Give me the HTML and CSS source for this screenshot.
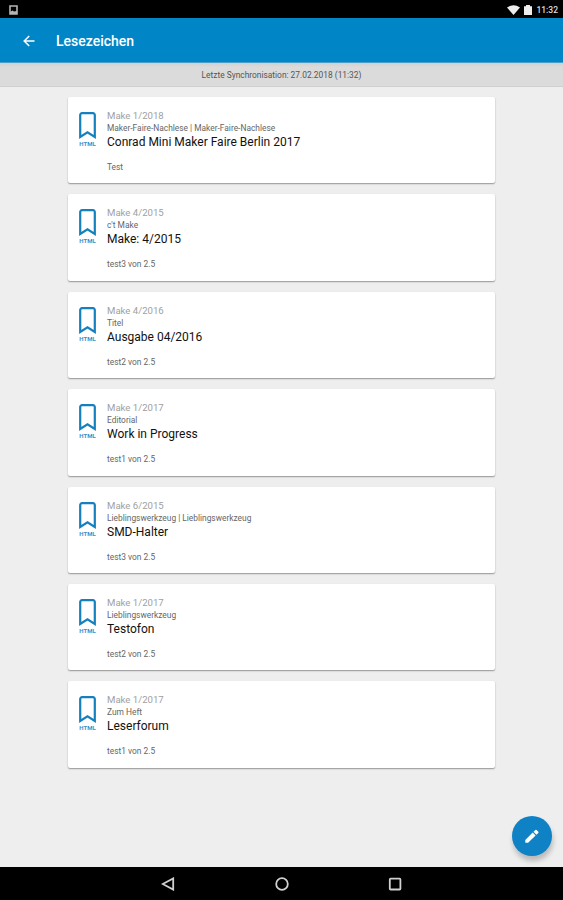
FILE: index.html
```html
<!DOCTYPE html>
<html lang="de">
<head>
    <meta charset="UTF-8">
    <meta name="viewport" content="width=device-width, initial-scale=1.0">
    <title>Lesezeichen</title>
    <link rel="stylesheet" href="styles.css">
</head>
<body>

    <!-- Bookmark-Symbol, wird in jeder Karte verwendet -->
    <svg class="symbols" width="0" height="0">
        <symbol id="bookmark" viewBox="0 0 17 27">
            <path d="M1.2 25V3a1.8 1.8 0 0 1 1.8-1.8h11a1.8 1.8 0 0 1 1.8 1.8v22l-7.3-4.600z" fill="none" stroke="#1580be" stroke-width="2.200"/>
        </symbol>
    </svg>

    <div class="statusbar">
        <svg class="picture" width="9" height="10" viewBox="0 0 9 10">
            <path d="M1 1h7v8H1z" fill="none" stroke="#b5b5b5" stroke-width="1.6"/>
            <path d="M1 9V7l2.500-1.500L5 6.500 8 6v3z" fill="#b5b5b5"/>
        </svg>
        <div class="status-right">
            <svg width="13" height="10" viewBox="0 0 13 10"><path d="M0 2.500Q6.500-2 13 2.500L6.500 10z" fill="#eee"/></svg>
            <svg width="8" height="10" viewBox="0 0 8 10"><path d="M0 1.200h2V0h4v1.200h2V10H0z" fill="#eee"/></svg>
            <span class="clock">11:32</span>
        </div>
    </div>

    <header class="appbar">
        <svg width="12" height="12" viewBox="0 0 12 12"><path d="M11.500 6H1.500M6.200 1L1.200 6l5 5" fill="none" stroke="#fff" stroke-width="1.500"/></svg>
        <h1>Lesezeichen</h1>
    </header>

    <div class="sync"><span>Letzte Synchronisation: 27.02.2018 (11:32)</span></div>

    <main class="list">
        <div class="card">
            <div class="card-icon"><svg><use href="#bookmark"/></svg><span>HTML</span></div>
            <div class="card-text">
                <div class="issue">Make 1/2018</div>
                <div class="section">Maker-Faire-Nachlese | Maker-Faire-Nachlese</div>
                <h2>Conrad Mini Maker Faire Berlin 2017</h2>
                <div class="note">Test</div>
            </div>
        </div>

        <div class="card">
            <div class="card-icon"><svg><use href="#bookmark"/></svg><span>HTML</span></div>
            <div class="card-text">
                <div class="issue">Make 4/2015</div>
                <div class="section">c't Make</div>
                <h2>Make: 4/2015</h2>
                <div class="note">test3 von 2.5</div>
            </div>
        </div>

        <div class="card">
            <div class="card-icon"><svg><use href="#bookmark"/></svg><span>HTML</span></div>
            <div class="card-text">
                <div class="issue">Make 4/2016</div>
                <div class="section">Titel</div>
                <h2>Ausgabe 04/2016</h2>
                <div class="note">test2 von 2.5</div>
            </div>
        </div>

        <div class="card">
            <div class="card-icon"><svg><use href="#bookmark"/></svg><span>HTML</span></div>
            <div class="card-text">
                <div class="issue">Make 1/2017</div>
                <div class="section">Editorial</div>
                <h2>Work in Progress</h2>
                <div class="note">test1 von 2.5</div>
            </div>
        </div>

        <div class="card">
            <div class="card-icon"><svg><use href="#bookmark"/></svg><span>HTML</span></div>
            <div class="card-text">
                <div class="issue">Make 6/2015</div>
                <div class="section">Lieblingswerkzeug | Lieblingswerkzeug</div>
                <h2>SMD-Halter</h2>
                <div class="note">test3 von 2.5</div>
            </div>
        </div>

        <div class="card">
            <div class="card-icon"><svg><use href="#bookmark"/></svg><span>HTML</span></div>
            <div class="card-text">
                <div class="issue">Make 1/2017</div>
                <div class="section">Lieblingswerkzeug</div>
                <h2>Testofon</h2>
                <div class="note">test2 von 2.5</div>
            </div>
        </div>

        <div class="card">
            <div class="card-icon"><svg><use href="#bookmark"/></svg><span>HTML</span></div>
            <div class="card-text">
                <div class="issue">Make 1/2017</div>
                <div class="section">Zum Heft</div>
                <h2>Leserforum</h2>
                <div class="note">test1 von 2.5</div>
            </div>
        </div>
    </main>

    <button class="fab" aria-label="Bearbeiten">
        <svg width="14" height="14" viewBox="0 0 14 14">
            <path d="M.3 10.900v2.800h2.800l7.500-7.300-2.900-2.900zM8.500 2.800l2.900 2.900 1.900-1.800a.8.8 0 0 0 0-1.100L11.500 1a.8.8 0 0 0-1.100 0z" fill="#fff"/>
        </svg>
    </button>

    <nav class="navbar">
        <svg width="14" height="14" viewBox="0 0 14 14"><path d="M12.200 1.400v11.200L1.700 7z"/></svg>
        <svg width="14" height="14" viewBox="0 0 14 14"><circle cx="7" cy="7" r="5.800"/></svg>
        <svg width="14" height="14" viewBox="0 0 14 14"><rect x="1.800" y="1.700" width="10.600" height="10.800" rx=".8"/></svg>
    </nav>

</body>
</html>
```
FILE: styles.css
```css
* {
    box-sizing: border-box;
}

body {
    margin: 0;
    height: 900px;
    display: flex;
    flex-direction: column;
    background: #eee;
    font-family: Roboto, sans-serif;
    overflow: hidden;
}

.symbols {
    display: none;
}

/* Statusleiste */
.statusbar {
    height: 18px;
    flex-shrink: 0;
    display: flex;
    align-items: center;
    justify-content: space-between;
    padding: 1px 5px 0 9px;
    background: #000;
}

.status-right {
    display: flex;
    align-items: center;
    gap: 4px;
}

.clock {
    color: #ddd;
    font-size: 8.5px;
    line-height: 10px;
    font-weight: 500;
}

/* Kopfzeile */
.appbar {
    height: 45px;
    flex-shrink: 0;
    display: flex;
    align-items: center;
    gap: 21px;
    padding: 1px 23px 0;
    background: #0085c6;
    border-bottom: 1px solid #4b9dca;
}

.appbar h1 {
    margin: 1px 0 0;
    color: #fff;
    font-size: 14px;
    font-weight: 500;
}

.sync {
    height: 24px;
    flex-shrink: 0;
    background: linear-gradient(#d2d0d1, #dbdbdb 4px);
    border-bottom: 1px solid #d0d0d0;
    color: #555;
    font-size: 8.4px;
    line-height: 24px;
    text-align: center;
}

/* Liste */
.list {
    flex: 1;
    padding: 10px 68px 0;
}

.card {
    height: 86.4px;
    margin-bottom: 11px;
    display: flex;
    padding: 12px 11px 0;
    background: #fff;
    border-radius: 2px;
    box-shadow: 0 1px 1.5px rgba(0, 0, 0, .38);
}

.card-icon {
    width: 17px;
    padding-top: 3px;
    display: flex;
    flex-direction: column;
    align-items: center;
}

.card-icon svg {
    width: 17px;
    height: 27px;
    flex-shrink: 0;
}

.card-icon span {
    margin-top: 1px;
    color: #3a8fc8;
    font-size: 6px;
    line-height: 7px;
    font-weight: 700;
}

.card-text {
    margin-left: 11px;
    white-space: nowrap;
}

.issue {
    color: #a0a0a0;
    font-size: 9.6px;
    line-height: 13px;
}

.section {
    color: #666;
    font-size: 8.4px;
    line-height: 12px;
}

.card h2 {
    margin: 0;
    color: #111;
    font-size: 12px;
    line-height: 16px;
    font-weight: 400;
}

.note {
    margin-top: 11px;
    color: #666;
    font-size: 8.4px;
    line-height: 12px;
}

.fab {
    position: absolute;
    left: 512px;
    top: 816px;
    width: 40px;
    height: 40px;
    padding: 0;
    display: flex;
    align-items: center;
    justify-content: center;
    border: 0;
    border-radius: 50%;
    background: #0e82c5;
    box-shadow: 1px 5px 5px rgba(0, 0, 0, .22);
}

/* Navigationsleiste */
.navbar {
    height: 33px;
    flex-shrink: 0;
    display: flex;
    align-items: center;
    justify-content: center;
    gap: 99.6px;
    background: #000;
}

.navbar svg {
    fill: none;
    stroke: #d0d0d0;
    stroke-width: 1.8;
}
```
